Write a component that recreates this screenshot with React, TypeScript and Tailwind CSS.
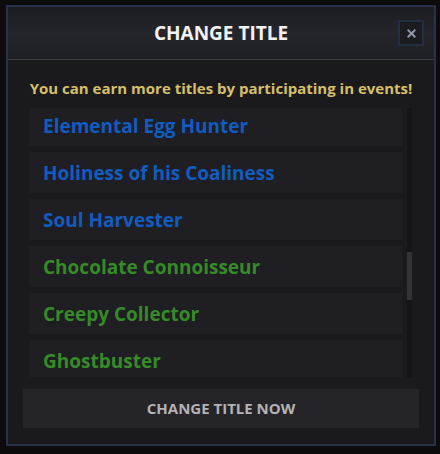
import React from 'react';
import { X } from 'lucide-react';

interface TitleItem {
  name: string;
  kind: 'event' | 'seasonal';
}

// the visible slice of the scrolled list
const titles: TitleItem[] = [
  { name: 'Elemental Egg Hunter', kind: 'event' },
  { name: 'Holiness of his Coaliness', kind: 'event' },
  { name: 'Soul Harvester', kind: 'event' },
  { name: 'Chocolate Connoisseur', kind: 'seasonal' },
  { name: 'Creepy Collector', kind: 'seasonal' },
  { name: 'Ghostbuster', kind: 'seasonal' },
];

const App: React.FC = () => {
  return (
    <div
      className="w-[440px] h-[454px] bg-[#0d0b0b] pt-[5px] pl-[6px] overflow-hidden"
      style={{ fontFamily: '"Open Sans", "Noto Sans", sans-serif' }}
    >
      <div className="w-[430px] h-[441px] border-2 border-[#27314a] bg-[#1a1a1c] flex flex-col">
        {/* Header */}
        <div className="relative shrink-0 h-[53px] flex items-center justify-center bg-gradient-to-b from-[#1c1d21] via-[#25262b] to-[#1e1f23] border-b border-[#3a3c42]">
          <h1 className="text-[19px] font-bold text-[#f2f2f2] leading-[24px]">CHANGE TITLE</h1>
          <button className="absolute right-[10px] top-[13px] w-[26px] h-[26px] border-2 border-[#242d42] bg-[#1b1c20] flex items-center justify-center">
            <X size={13} strokeWidth={3.5} className="text-[#8f98aa]" />
          </button>
        </div>

        {/* Hint */}
        <p className="mt-[17px] text-center text-[15px] font-bold text-[#d6bf6a] leading-[22px] whitespace-nowrap">
          You can earn more titles by participating in events!
        </p>

        {/* List */}
        <div className="mt-[9px] ml-[21px] mr-[22px] flex gap-[5px] h-[269px] shrink-0">
          <div className="flex-1 overflow-hidden">
            <div className="flex flex-col gap-[6px] -mt-[3px]">
              {titles.map((t) => (
                <div
                  key={t.name}
                  className="shrink-0 h-[41px] bg-[#1f1e22] flex items-center pl-[14px]"
                >
                  <span
                    className={`text-[19px] font-bold leading-[26px] ${
                      t.kind === 'event' ? 'text-[#105cc0]' : 'text-[#368a28]'
                    }`}
                  >
                    {t.name}
                  </span>
                </div>
              ))}
            </div>
          </div>
          <div className="relative w-[5px] bg-[#141415]">
            <div className="absolute left-0 right-0 top-[144px] h-[48px] bg-[#333336]" />
          </div>
        </div>

        {/* Action */}
        <button className="mt-[12px] mx-[15px] h-[39px] shrink-0 bg-[#252428] text-[15px] font-bold text-[#b3b3b3] flex items-center justify-center">
          CHANGE TITLE NOW
        </button>
      </div>
    </div>
  );
};

export default App;
